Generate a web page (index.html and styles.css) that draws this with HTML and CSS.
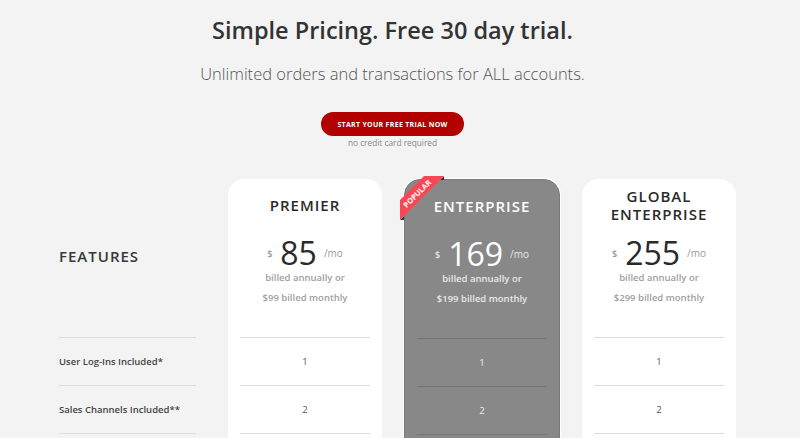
FILE: index.html
```html
<!DOCTYPE html>
<html>
<head>
<meta charset="utf-8">
<link rel="stylesheet" href="styles.css">
</head>
<body>
<header class="hero">
  <h1 class="hero-title">Simple Pricing. Free 30 day trial.</h1>
  <p class="hero-sub">Unlimited orders and transactions for ALL accounts.</p>
  <a class="cta" href="#">START YOUR FREE TRIAL NOW</a>
  <p class="cta-note">no credit card required</p>
</header>

<section class="pricing">
  <div class="features">
    <div class="features-head">FEATURES</div>
    <ul class="rows">
      <li class="row row-label">User Log-Ins Included*</li>
      <li class="row row-label">Sales Channels Included**</li>
    </ul>
  </div>

  <div class="card">
    <div class="card-head">
      <div class="plan-name">PREMIER</div>
      <div class="price"><span class="cur">$</span><span class="amount">85</span><span class="per">/mo</span></div>
      <div class="billed">billed annually or</div>
      <div class="billed">$99 billed monthly</div>
    </div>
    <ul class="rows">
      <li class="row">1</li>
      <li class="row">2</li>
    </ul>
  </div>

  <div class="card card-featured">
    <div class="ribbon">
      <svg width="44" height="44" viewBox="0 0 44 44">
        <polygon points="44,0 44,4 40,4" fill="#2b3550"/>
        <polygon points="4,40 4,44 0,44" fill="#2b3550"/>
        <polygon points="24,0 44,0 0,44 0,24" fill="#fb4655"/>
        <text transform="translate(17,17.5) rotate(-45)" text-anchor="middle" dominant-baseline="central" class="ribbon-text">POPULAR</text>
      </svg>
    </div>
    <div class="card-head">
      <div class="plan-name">ENTERPRISE</div>
      <div class="price"><span class="cur">$</span><span class="amount">169</span><span class="per">/mo</span></div>
      <div class="billed">billed annually or</div>
      <div class="billed">$199 billed monthly</div>
    </div>
    <ul class="rows">
      <li class="row">1</li>
      <li class="row">2</li>
    </ul>
  </div>

  <div class="card">
    <div class="card-head">
      <div class="plan-name"><span class="plan-line">GLOBAL</span><span class="plan-line">ENTERPRISE</span></div>
      <div class="price"><span class="cur">$</span><span class="amount">255</span><span class="per">/mo</span></div>
      <div class="billed">billed annually or</div>
      <div class="billed">$299 billed monthly</div>
    </div>
    <ul class="rows">
      <li class="row">1</li>
      <li class="row">2</li>
    </ul>
  </div>
</section>
</body>
</html>
```

FILE: styles.css
```css
* { box-sizing: border-box; }

body {
  margin: 0;
  background: #f3f3f3;
  font-family: "Open Sans", "Noto Sans", sans-serif;
  color: #333;
}

.hero {
  display: flex;
  flex-direction: column;
  align-items: center;
  padding-top: 14px;
  padding-right: 15px;
}

.hero-title {
  margin: 0;
  font-size: 23.5px;
  line-height: 32px;
  font-weight: 600;
  color: #333;
}

.hero-sub {
  margin: 14px 0 0;
  font-size: 16.5px;
  line-height: 28px;
  font-weight: 300;
  color: #555;
}

.cta {
  margin-top: 24px;
  width: 143px;
  height: 24px;
  border-radius: 12px;
  background: #b30000;
  color: #fff;
  text-decoration: none;
  font-size: 7px;
  font-weight: 700;
  letter-spacing: 0.3px;
  display: flex;
  align-items: center;
  justify-content: center;
}

.cta-note {
  margin: 1px 0 0;
  font-size: 8.3px;
  line-height: 12px;
  color: #888;
}

.pricing {
  display: flex;
  align-items: flex-start;
  padding-left: 59px;
  margin-top: 30px;
}

.features {
  width: 137px;
  margin-right: 32px;
}

.features-head {
  height: 158px;
  display: flex;
  align-items: center;
  padding-bottom: 4px;
  font-size: 15px;
  font-weight: 600;
  letter-spacing: 1px;
  color: #383838;
}

.rows {
  list-style: none;
  margin: 0;
  padding: 0;
  border-bottom: 1px solid #ddd;
}

.row {
  height: 48px;
  border-top: 1px solid #ddd;
  display: flex;
  align-items: center;
  justify-content: center;
  font-size: 9.5px;
  color: #555;
}

.row-label {
  justify-content: flex-start;
  font-weight: 600;
  color: #444;
}

.card {
  position: relative;
  width: 154px;
  margin-right: 22px;
  background: #fff;
  border-radius: 16px;
  padding: 0 12px 60px;
}

.card-featured {
  width: 156px;
  background: #888;
  border: 1px solid #7a7a7a;
  box-shadow: 0 0 0 1px #fff;
}

.card-head {
  height: 158px;
  padding-top: 8px;
  text-align: center;
}

.plan-name {
  height: 36px;
  display: flex;
  flex-direction: column;
  align-items: center;
  justify-content: center;
  font-size: 15px;
  line-height: 18px;
  font-weight: 600;
  letter-spacing: 1px;
  color: #2a2a2a;
}

.plan-line {
  display: block;
  height: 18px;
}

.price {
  margin-top: 15px;
  height: 30px;
  display: flex;
  align-items: center;
  justify-content: center;
}

.cur {
  font-size: 9px;
  font-weight: 600;
  color: #999;
  margin-right: 8px;
}

.amount {
  font-size: 32px;
  line-height: 30px;
  font-weight: 400;
  color: #2a2a2a;
}

.per {
  font-size: 10px;
  color: #999;
  margin-left: 7px;
}

.billed {
  font-size: 9.5px;
  line-height: 20px;
  font-weight: 600;
  color: #a0a0a0;
}

.card-featured .plan-name,
.card-featured .amount { color: #fff; }
.card-featured .cur,
.card-featured .per { color: #e6e6e6; }
.card-featured .billed { color: #e8e8e8; }
.card-featured .rows,
.card-featured .row { border-color: #757575; }
.card-featured .row { color: #f0f0f0; }

.ribbon {
  position: absolute;
  left: -5px;
  top: -4px;
  width: 44px;
  height: 44px;
}

.ribbon svg { display: block; }

.ribbon-text {
  font-family: "Open Sans", sans-serif;
  font-size: 7.5px;
  font-weight: 700;
  fill: #fff;
}
```
